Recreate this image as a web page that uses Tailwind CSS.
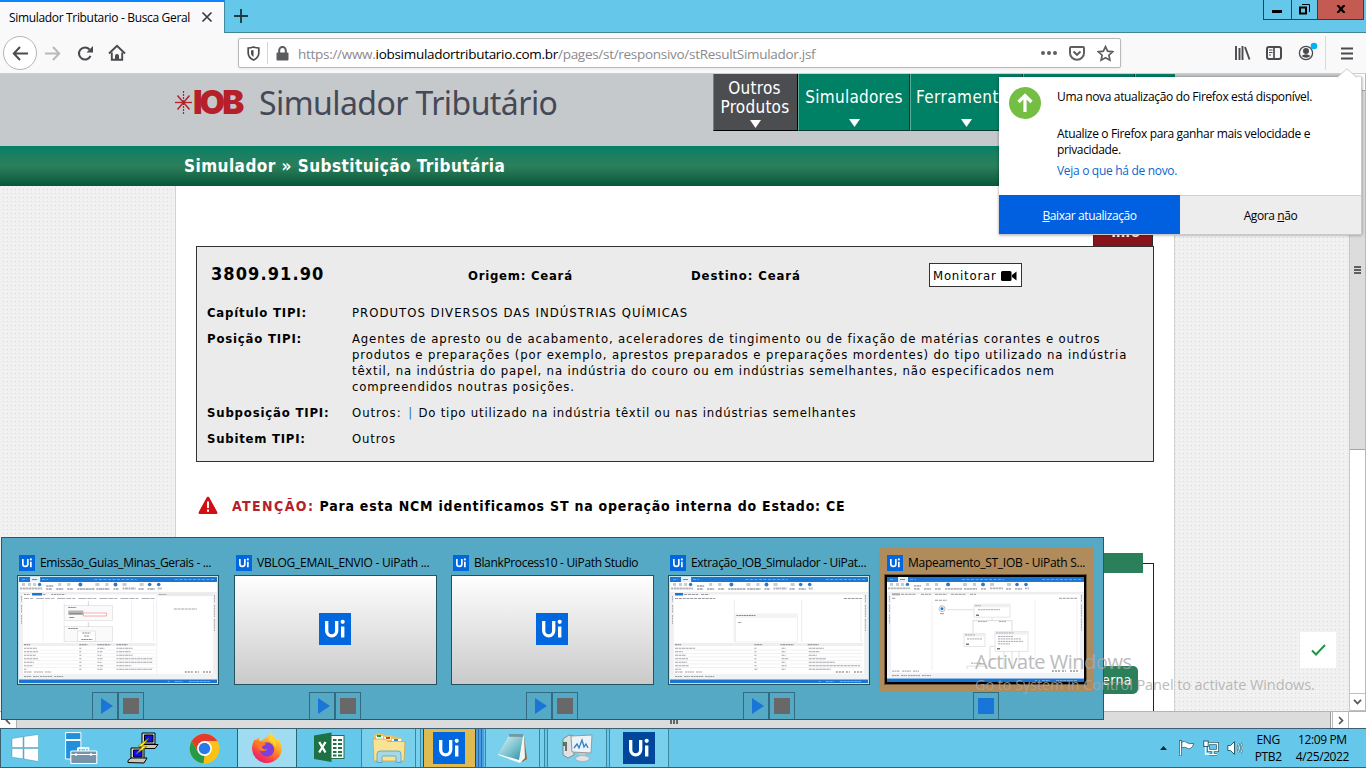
<!DOCTYPE html>
<html lang="pt">
<head>
<meta charset="utf-8">
<title>Simulador Tributario - Busca Geral</title>
<script src="https://cdn.jsdelivr.net/npm/@tailwindcss/browser@4"></script>
</head>
<body class="relative flex h-[768px] w-[1366px] flex-col overflow-hidden bg-white font-['Open_Sans',sans-serif] text-[12px] whitespace-nowrap text-black">

<!-- shared symbols -->
<svg class="hidden">
  <symbol id="ui" viewBox="0 0 32 32"><rect width="32" height="32" fill="#0067df"/><path d="M7.700 8v9.800a5 5 0 0 0 10 0V8" fill="none" stroke="#fff" stroke-width="3.300"/><path d="M23.700 13.500v11" stroke="#fff" stroke-width="3.400"/><circle cx="23.700" cy="8.800" r="2.100" fill="#fff"/></symbol>
  <symbol id="ribbon" viewBox="0 0 197 106">
    <rect width="197" height="106" fill="#fff"/>
    <rect width="197" height="5" fill="#1976d2"/><rect x="11" y="0" width="10" height="5" fill="#e8f2fc"/>
    <path d="M3 2.500h5M23 2.500h6M75 2.500h42M155 2.500h40" stroke="#6aa7e2" stroke-dasharray="3 1.500"/><path d="M13 2.500h5" stroke="#4b8fd0"/>
    <g fill="none" stroke="#6c7f94" stroke-width="3"><path d="M3 7.500h3M9 7.500h3M14 7.500h3M39 7.500h3M48 7.500h3M60 7.500h3M76 7.500h4M86 7.500h3M103 7.500h4M120 7.500h4" opacity=".4"/></g>
    <g fill="#2f78c8"><circle cx="20.500" cy="7.500" r="1.700"/><circle cx="61" cy="7.500" r="1.900"/><circle cx="96" cy="7.500" r="1.900"/><circle cx="130" cy="7.500" r="1.800"/><circle cx="139" cy="7.500" r="1.800"/></g>
    <path d="M1 11.500h22M27 9h7M27 12h6M37 12h7M48 12h6M58 12h17M77 12h13M94 12h5M103 11.500h13M119 12h5M128 12h7M138 11.500h4" stroke="#b4b4bb" stroke-width="1.800" stroke-dasharray="2 .5 3 .4"/>
    <rect y="15" width="197" height="2.500" fill="#eeeef0"/>
    <rect y="16" width="4" height="84" fill="#f1f1f3"/><rect x="193" y="16" width="4" height="84" fill="#f1f1f3"/>
    <path d="M2.500 19v6M2.500 28v8M2.500 38v9M194.500 18v7M194.500 28v12M194.500 42v12" stroke="#b0b0b6" stroke-dasharray="2 .6"/>
    <rect y="97" width="197" height="5.500" fill="#f2f2f4"/>
    <path d="M5 95h8M15 95h9M26 95h6M5 99.500h7M14 99.500h6M21 99.500h12M35 99.500h9" stroke="#9a9aa0" stroke-dasharray="2 .5"/>
    <path d="M165 95h8M175 95h4M183 95h9" stroke="#999" stroke-width="1.500" stroke-dasharray="2 1"/>
    <rect y="102.500" width="197" height="3.500" fill="#1976d2"/><path d="M148 104.500h2M155 104.500h8M169 104.500h21" stroke="#6fabe6" stroke-dasharray="3 .6"/>
  </symbol>
  <symbol id="play" viewBox="0 0 12 16"><path d="M0 0l12 8-12 8z" fill="#1976d8"/></symbol>
</svg>

<!-- tab strip -->
<header class="flex h-[33px] shrink-0 border-b border-[#458593] bg-[#65c8ea]">
  <div class="flex h-[33px] w-[225px] items-center justify-between border-t-2 border-r border-t-[#0a84ff] border-r-[#3e8aa0] bg-[#f9f9fb] pr-[11px] pl-[9px]">
    <span class="tracking-[-0.33px]">Simulador Tributario - Busca Geral</span>
    <svg class="mb-px size-[12px]" viewBox="0 0 12 12"><path d="M1.500 1.500l9 9m0-9l-9 9" stroke="#3b3b3d" stroke-width="1.700"/></svg>
  </div>
  <svg class="mt-[9px] ml-[9px] size-[14px]" viewBox="0 0 14 14"><path d="M7 0v14M0 7h14" stroke="#1e3c46" stroke-width="1.900"/></svg>
  <div class="mr-[2px] ml-auto flex h-[20px] border border-t-0 border-[#24434e]">
    <div class="flex w-[28px] border-r border-[#24434e]"><span class="mt-[10px] ml-[8px] h-[3px] w-[10px] bg-black"></span></div>
    <div class="w-[26px] border-r border-[#24434e]"><svg class="mt-[4px] ml-[7px] size-[11px]" viewBox="0 0 11 11"><path d="M1 3.500h6v6H1z" fill="none" stroke="#000" stroke-width="2"/><path d="M3 .5h7.500V8" fill="none" stroke="#000"/></svg></div>
    <div class="w-[45px] bg-[#c35b52]"><svg class="mt-[5px] ml-[18px] h-[8px] w-[10px]" viewBox="0 0 10 8"><path d="M1.500 0l7 8M8.500 0l-7 8" stroke="#000" stroke-width="2.200"/></svg></div>
  </div>
</header>

<!-- navigation bar -->
<nav class="flex h-[41px] shrink-0 items-center border-b border-[#cfcfd2] bg-[#f9f9fa] text-[#4a4a4f]">
  <div class="ml-[3px] flex size-[34px] items-center justify-center rounded-full border border-[#b5b5b8] bg-white"><svg class="size-[17px]" viewBox="0 0 17 17" fill="none" stroke="currentColor" stroke-width="2"><path d="M16 8.500H2M8 2L1.800 8.500 8 15"/></svg></div>
  <svg class="ml-[8px] size-[17px]" viewBox="0 0 17 17" fill="none" stroke="#b9b9bb" stroke-width="2"><path d="M0 8.500h14M8 2l6.200 6.500L8 15"/></svg>
  <svg class="ml-[15px] size-[17px]" viewBox="0 0 17 17"><path d="M13.500 10.800A6 6 0 1 1 12.500 4.500" fill="none" stroke="currentColor" stroke-width="2.100"/><path d="M16 1v6.500H9.500z" fill="currentColor"/></svg>
  <svg class="ml-[14px] size-[18px]" viewBox="0 0 18 18"><path d="M1 9.500L9 1.800l8 7.700" fill="none" stroke="currentColor" stroke-width="2"/><path d="M3.800 8.500v7.300h10.400V8.500" fill="none" stroke="currentColor" stroke-width="1.900"/><path d="M7 16v-4.500q0-1.500 2-1.500t2 1.500V16z" fill="currentColor"/></svg>
  <div class="ml-[112px] flex h-[30px] w-[883px] items-center rounded-[2px] border border-[#b9b9bc] bg-white pl-[8px] shadow-[0_1px_3px_rgba(0,0,0,.07)]">
    <svg class="h-[15px] w-[13px]" viewBox="0 0 13 15"><path d="M6.500 1C4.500 1.800 3 2 1.200 2v5c0 3.500 2 5.500 5.300 7 3.300-1.500 5.300-3.500 5.300-7V2c-1.800 0-3.300-.2-5.300-1z" fill="none" stroke="currentColor" stroke-width="1.700"/><path d="M6.500 4v7C4.800 9.800 4 8.800 4 7V4.500z" fill="currentColor"/></svg>
    <span class="ml-[7px] h-[22px] w-px bg-[#d7d7db]"></span>
    <svg class="ml-[8px] h-[15px] w-[13px] text-[#5c5c60]" viewBox="0 0 13 15"><rect x=".5" y="6.500" width="12" height="8" rx="1" fill="currentColor"/><path d="M3.200 7V4.200a3.300 3.300 0 0 1 6.600 0V7" fill="none" stroke="currentColor" stroke-width="2"/></svg>
    <span class="ml-[9px] pt-[2px] text-[13.500px] tracking-[-0.288px] text-[#8a8a8e]">https://www.<span class="text-black">iobsimuladortributario.com.br</span>/pages/st/responsivo/stResultSimulador.jsf</span>
    <svg class="mr-[12px] ml-auto h-[4px] w-[16px]" viewBox="0 0 16 4" fill="#5f5f63"><circle cx="2" cy="2" r="2"/><circle cx="8" cy="2" r="2"/><circle cx="14" cy="2" r="2"/></svg>
    <svg class="mr-[12px] h-[15px] w-[16px]" viewBox="0 0 16 15" fill="none" stroke="#5f5f63" stroke-width="2"><path d="M1 2q0-1 1-1h12q1 0 1 1v5a7 6.800 0 0 1-14 0z"/><path d="M4.500 5.500L8 8.800l3.500-3.300"/></svg>
    <svg class="mr-[6px] size-[17px]" viewBox="0 0 17 17"><path d="M8.500 1.600l2.100 4.600 5 .6-3.700 3.400 1 5-4.400-2.500-4.400 2.500 1-5L1.400 6.800l5-.6z" fill="none" stroke="#5f5f63" stroke-width="1.700"/></svg>
  </div>
  <svg class="ml-[113px] h-[14px] w-[17px]" viewBox="0 0 17 14"><path d="M2 0v14M5.500 2v12M8.500 0v14M11 1l4.500 12.500" fill="none" stroke="currentColor" stroke-width="1.900"/></svg>
  <svg class="ml-[15px] h-[14px] w-[16px]" viewBox="0 0 16 14" fill="none" stroke="currentColor"><rect x="1" y="1" width="14" height="12" rx="2" stroke-width="2"/><path d="M8 1v12" stroke-width="1.700"/><path d="M3 4h3.500M3 6.500h3.500M3 9h2" stroke-width="1"/></svg>
  <svg class="mt-[8px] ml-[16px] size-[20px] self-start" viewBox="0 0 20 20"><circle cx="8" cy="12" r="6.600" fill="none" stroke="currentColor" stroke-width="1.300"/><circle cx="8" cy="10" r="3" fill="currentColor"/><path d="M3.500 15q4.500-3.600 9 0-4 3.500-9 0z" fill="currentColor"/><circle cx="16" cy="5" r="3.300" fill="#00b3f4"/></svg>
  <span class="ml-[7px] h-[34px] w-px bg-[#d9d9dc]"></span>
  <svg class="ml-[15px] h-[13px] w-[12px]" viewBox="0 0 12 13"><path d="M0 1.500h12M0 6.500h12M0 11.500h12" stroke="currentColor" stroke-width="2"/></svg>
</nav>

<!-- page viewport -->
<div class="flex h-[637px] shrink-0">
  <main class="w-[1349px] bg-[#f1f1f1] font-['DejaVu_Sans_Condensed','DejaVu_Sans',sans-serif] [background-image:linear-gradient(90deg,#f1f1f1_3px,transparent_3px),linear-gradient(#f1f1f1_3px,#d9d9d9_3px)] bg-[size:4px_4px]">
    <div class="flex h-[72px] bg-[#c5c9cc] pl-[175px]">
      <svg class="mt-[16px] h-[25px] w-[18px]" viewBox="0 0 18 25" fill="none" stroke="#b6202a"><path d="M8.500 1v23" stroke-width="1.200" stroke-dasharray="2 1"/><path d="M0 12.500h17" stroke-width="1.300"/><path d="M2.500 5.500l12 14M14.500 5.500l-12 14" stroke-width="1.500"/></svg>
      <div class="mt-[13px] w-[51px] font-['Inter',sans-serif] text-[33px] leading-[30px] font-black tracking-[-3px] text-[#b6202a]">IOB</div>
      <div class="mt-[8px] ml-[15px] w-[454px] font-['Noto_Sans',sans-serif] text-[32px] leading-[42px] tracking-[-0.57px] text-[#464856]">Simulador Tributário</div>
      <div class="flex h-[57px] w-[462px] bg-[#008064] text-center text-[17px] leading-[19px] tracking-[0.25px] text-white">
        <div class="w-[85px] border-r border-b border-l border-r-black border-b-black border-l-[#7c7e83] bg-[#4c4d51] pt-[5px]"><span class="mr-[2px]">Outros</span><br><span class="mr-px">Produtos</span><svg class="mx-auto mt-[3px] h-[8px] w-[11px]" viewBox="0 0 11 8"><path d="M0 0h11L5.500 8z" fill="#fff"/></svg></div>
        <div class="w-[112px] border-r border-b border-l border-r-[#013c2d] border-b-[#013c2d] border-l-[#5fae9b] pt-[14px]">Simuladores<svg class="mx-auto mt-[12px] h-[8px] w-[11px]" viewBox="0 0 11 8"><path d="M0 0h11L5.500 8z" fill="#fff"/></svg></div>
        <div class="w-[113px] border-r border-b border-l border-r-[#013c2d] border-b-[#013c2d] border-l-[#5fae9b] pt-[14px]"><span class="tracking-[0.45px]">Ferramentas</span><svg class="mx-auto mt-[12px] h-[8px] w-[11px]" viewBox="0 0 11 8"><path d="M0 0h11L5.500 8z" fill="#fff"/></svg></div>
        <div class="w-[112px] border-r border-l border-r-[#013c2d] border-l-[#5fae9b]"></div>
        <div class="w-[40px] border-l border-[#5fae9b]"></div>
      </div>
    </div>
    <div class="h-[40px] bg-gradient-to-b from-[#008064] via-[#2b7f5b] to-[#05583a] pl-[184px] text-[17px] leading-[40px] font-bold tracking-[0.46px] text-white">Simulador » Substituição Tributária</div>

    <div class="ml-[175px] h-[525px] w-[1000px] border-x border-[#d2d2d2] bg-white pl-[20px]">
      <div class="ml-[897px] flex h-[60px] w-[60px] items-end justify-center border border-b-0 border-[#2c2c2c] bg-gradient-to-b from-[#b6202a] to-[#83131a] pb-[4px] pl-[5px] font-['DejaVu_Sans',sans-serif] text-[13px] leading-[18px] font-bold text-white">Info</div>
      <section class="h-[216px] w-[958px] border border-[#333] bg-[#ebebeb] px-[10px] text-[13px] leading-[16px]">
        <div class="flex h-[54px] items-center pt-[2px] font-bold">
          <span class="w-[261px] pb-[3px] pl-[4px] text-[18px] tracking-[1.100px]">3809.91.90</span>
          <span class="w-[223px] pt-px tracking-[0.75px]">Origem: Ceará</span>
          <span class="w-[238px] pt-px tracking-[0.88px]">Destino: Ceará</span>
          <button class="flex h-[24px] w-[93px] items-center border border-[#333] bg-white pt-px pl-[3px] font-normal tracking-[0.8px]">Monitorar<svg class="ml-[4px] h-[10px] w-[16px]" viewBox="0 0 16 10"><rect width="10.500" height="10" rx="1.500"/><path d="M11 4l4.500-3.500v9L11 6z"/></svg></button>
        </div>
        <dl class="mt-[4px] grid grid-cols-[145px_1fr] gap-y-[10px] tracking-[0.84px]">
          <dt class="font-bold tracking-[0.79px]">Capítulo TIPI:</dt><dd class="tracking-[1.020px]">PRODUTOS DIVERSOS DAS INDÚSTRIAS QUÍMICAS</dd>
          <dt class="font-bold tracking-[0.82px]">Posição TIPI:</dt><dd><span>Agentes de apresto ou de acabamento, aceleradores de tingimento ou de fixação de matérias corantes e outros</span><br><span class="tracking-[0.87px]">produtos e preparações (por exemplo, aprestos preparados e preparações mordentes) do tipo utilizado na indústria</span><br>têxtil, na indústria do papel, na indústria do couro ou em indústrias semelhantes, não especificados nem<br>compreendidos noutras posições.</dd>
          <dt class="font-bold tracking-[0.82px]">Subposição TIPI:</dt><dd><span class="tracking-[0.95px]">Outros:</span> <span class="mr-px ml-[2px] text-[#2a72b5]">|</span> <span class="tracking-[0.79px]">Do tipo utilizado na indústria têxtil ou nas indústrias semelhantes</span></dd>
          <dt class="font-bold tracking-[0.76px]">Subitem TIPI:</dt><dd>Outros</dd>
        </dl>
      </section>
      <div class="mt-[34px] flex h-[20px] items-center text-[14px] font-bold tracking-[0.78px]">
        <svg class="mb-px ml-[2px] h-[19px] w-[20px]" viewBox="0 0 20 19"><path d="M10 .7c1 0 1.300.7 1.600 1.200l7.600 14c.6 1.300 0 2.200-1.200 2.200H2c-1.200 0-1.800-.9-1.200-2.200l7.600-14C8.700 1.400 9 .7 10 .7z" fill="#d20f14"/><path d="M10 5.500v6.500M10 13.500v2.200" stroke="#fff" stroke-width="2"/></svg>
        <span class="ml-[14px]"><span class="tracking-[1.400px] text-[#b6202a]">ATENÇÃO:</span> Para esta NCM identificamos ST na operação interna do Estado: CE</span>
      </div>
      <div class="mt-[47px] h-[148px] w-[958px] border border-b-0 border-[#222]">
        <div class="mt-[-11px] ml-[9px] h-[20px] w-[937px] bg-[#2b7f5b]"></div>
        <div class="mt-[93px] mr-[15px] ml-auto flex h-[28px] w-[190px] items-center justify-end rounded-[5px] bg-[#2b7f5b] pr-[6px] text-[14px] tracking-[0.4px] text-white">Interna</div>
      </div>
    </div>
  </main>
  <!-- vertical scrollbar -->
  <div class="flex w-[17px] flex-col border-x border-r-[#b9b9b9] border-l-[#c6c6c6] bg-white">
    <div class="h-[16px]"></div>
    <div class="flex h-[360px] flex-col items-center justify-center gap-px border-y border-[#a6a6a6] bg-[#dcdcdc]"><i class="h-[2px] w-[7px] bg-[#606060]"></i><i class="h-[2px] w-[7px] bg-[#606060]"></i><i class="h-[2px] w-[7px] bg-[#606060]"></i></div>
    <div class="mt-auto flex h-[18px] items-center justify-center border-y border-[#c0c0c0]"><svg class="h-[6px] w-[9px]" viewBox="0 0 9 6"><path d="M1 .8l3.500 3.700L8 .8" fill="none" stroke="#555" stroke-width="1.700"/></svg></div>
  </div>
</div>

<!-- horizontal scrollbar -->
<div class="flex h-[17px] shrink-0 border-t border-[#b4b4b4] bg-white">
  <div class="flex w-[17px] items-center justify-center border-r border-[#b0b0b0]"><svg class="h-[9px] w-[6px]" viewBox="0 0 6 9"><path d="M5 1L1.500 4.500 5 8" fill="none" stroke="#555" stroke-width="1.700"/></svg></div>
  <div class="flex w-[1314px] items-center justify-center gap-px border-r border-[#999] bg-[#dcdcdc]"><i class="h-[7px] w-[2px] bg-[#666]"></i><i class="h-[7px] w-[2px] bg-[#666]"></i><i class="h-[7px] w-[2px] bg-[#666]"></i></div>
  <div class="ml-px flex w-[17px] items-center justify-center border-x border-[#b9b9b9]"><svg class="h-[9px] w-[6px]" viewBox="0 0 6 9"><path d="M1 1l3.500 3.500L1 8" fill="none" stroke="#555" stroke-width="1.700"/></svg></div>
</div>

<!-- taskbar -->
<footer class="flex h-[40px] shrink-0 border border-r-0 border-[#39606e] bg-[#65c8ea]">
  <svg class="mt-[5px] ml-[10px] size-[28px]" viewBox="0 0 28 28" fill="#fff" stroke="#2e86a5" stroke-width=".4"><path d="M1 4.500l11-1.800v10.800H1zM13 2.500L27.500.5v13H13zM1 14.500h11v10.300L1 23.200zM13 14.500h14.500v13L13 25z"/></svg>
  <svg class="mt-[3px] ml-[26px] h-[32px] w-[33px]" viewBox="0 0 33 32"><g stroke="#fff"><path d="M.6.6h15.300v6.900H.600zM.600 8.500h15.300V27H.600z" fill="#2090dc"/><path d="M12.500 19v-3h8v3" fill="none"/><rect x="5.800" y="19" width="26" height="12.500" rx="1" fill="#7893a9" stroke-width="1.100"/><path d="M13.500 18.500V16h10v2.500" fill="none" stroke-width="1.500"/><path d="M6 22.500h26"/></g><circle cx="11" cy="22.500" r="1.300" fill="#fff"/><circle cx="26" cy="22.500" r="1.300" fill="#fff"/></svg>
  <svg class="mt-[3px] ml-[29px] size-[32px]" viewBox="0 0 32 32"><g stroke="#000"><path d="M15 1h13v11H15z" fill="#d8d8cc"/><path d="M17.500 3h8.500v7h-8.500z" fill="#1010ef"/><path d="M13 15.500l3-3h15l-3 4H14z" fill="#c9c9bb"/><path d="M4 16h13v11H4z" fill="#d8d8cc"/><path d="M6.500 18h8.500v7H6.500z" fill="#1010ef"/><path d="M1 30.500v-2l3-2.500h16l-3 5z" fill="#c9c9bb"/><path d="M22 6l-11 8 4.500.5L9 22l11-7.500-4.500-.5z" fill="#fff21a" stroke="#7c7200" stroke-width=".6"/></g></svg>
  <svg class="mt-[4px] ml-[30px] size-[31px]" viewBox="0 0 48 48"><circle cx="24" cy="24" r="23" fill="#fbc116"/><path d="M4.100 12.500A23 23 0 0 1 43.900 12.500H24L14 29.800z" fill="#e33b2e"/><path d="M4.100 12.500L14 29.800 24 34.500 22.500 47A23 23 0 0 1 4.100 12.500z" fill="#259b48"/><path d="M43.900 12.500A23 23 0 0 1 22.500 47L34 29.800 33 12.500z" fill="#fbc116"/><circle cx="24" cy="24" r="11.500" fill="#fff"/><circle cx="24" cy="24" r="9" fill="#287ae8"/></svg>
  <div class="ml-[17px] flex w-[60px] items-center justify-center border-x border-[#276577] bg-[#a0dcf1]">
    <svg class="size-[32px]" viewBox="0 0 32 32"><defs><linearGradient id="fx" x1=".8" y1="0" x2=".2" y2="1"><stop offset="0" stop-color="#fff044"/><stop offset=".4" stop-color="#ff9b25"/><stop offset=".75" stop-color="#fb3c48"/><stop offset="1" stop-color="#e31587"/></linearGradient></defs><path d="M20 .5c2 3 4 4 5 6.500l3 1c3 5 3.500 10.500 1 15.500A15 15 0 0 1 1 17C1 12 2.500 9 4 7l.5 1.500 3-3 1 3.500 3-.5C14 5 18 5 20 .5z" fill="url(#fx)"/><circle cx="16" cy="17.500" r="7.200" fill="#8040d8"/><path d="M4 8l6 2 5 1.500c-1 2-3 2-4 3 0 2.500 3 4 5.500 2-1.500 4-8.500 3.500-9.500-1z" fill="#ff7a1e"/><path d="M17 8c4 1 7 4 7 8 2-4 0-9-4-12z" fill="#ffd52e"/></svg>
  </div>
  <svg class="mt-[3px] ml-[16px] h-[32px] w-[33px]" viewBox="0 0 33 32"><rect x="17" y="3.500" width="14" height="23" fill="#fff" stroke="#1e7145"/><path d="M20 8h3.500M25 8h4M20 12h3.500M25 12h4M20 16h3.500M25 16h4M20 20h3.500M25 20h4M20 23.500h3.500M25 23.500h4" stroke="#1e7145" stroke-width="2"/><path d="M1 3.500L18.500.5v29.500L1 27z" fill="#1e7145"/><path d="M6.200 10l6.300 10.500M12.500 10L6.200 20.500" stroke="#fff" stroke-width="2.300"/></svg>
  <div class="ml-[15px] flex w-[55px] items-center justify-center border-x border-[#3b86a1] bg-[#79d0ec]">
    <svg class="h-[31px] w-[34px]" viewBox="0 0 34 31"><path d="M2 4V2l2-1.500h7L13 2h6l2 1 9 2v22L4 28z" fill="#e7c25e"/><path d="M4 3h7v3H4zM12 4h7v3h-7zM20 6h9v3h-9z" fill="#fff"/><path d="M5 2h4v2H5z" fill="#18a336"/><path d="M14 4h4v2h-4z" fill="#d33b28"/><path d="M22 6h4v2h-4z" fill="#238fdc"/><path d="M1 6h12l3 2.500h17L32 28H2z" fill="#f8e394" stroke="#caa03d" stroke-width=".7"/><path d="M5 29.500V21q0-3 3-3h18q3 0 3 3v8.500h-5V24q0-1-1-1H11q-1 0-1 1v5.500z" fill="#9ad7f2" fill-opacity=".9" stroke="#539fc5" stroke-width=".8"/></svg>
  </div>
  <div class="w-[5px] border-r border-[#3b86a1] bg-[#79d0ec]"></div>
  <div class="ml-[2px] flex w-[53px] items-center border-x border-[#39481f] bg-[#dfba50] pl-[9px]"><svg class="size-[32px]"><use href="#ui"/></svg></div>
  <div class="flex w-[8px]"><i class="w-[3px] border-r border-[#286ca8] bg-[#4b9ce2]"></i><i class="w-[3px] border-r border-[#286ca8] bg-[#4b9ce2]"></i><i class="w-[2px] bg-[#4b9ce2]"></i></div>
  <div class="ml-px flex w-[55px] items-center justify-center border-x border-[#3b86a1] bg-[#79d0ec]">
    <svg class="size-[31px]" viewBox="0 0 31 31"><defs><linearGradient id="np" x2="1" y2="1"><stop stop-color="#e3f8fb"/><stop offset=".6" stop-color="#73bfcb"/><stop offset="1" stop-color="#2f8c9d"/></linearGradient></defs><path d="M27 3l3 23-5 3z" fill="#8a6a43"/><path d="M24 4l3-1 1 22-5 5z" fill="#f4f4f2"/><path d="M12 3h14l-3 27L1 22z" fill="#f6fafa"/><path d="M12 3h14l-4 24L1 21z" fill="url(#np)"/><path d="M12.500 2.500h14" stroke="#666" stroke-width="3" stroke-dasharray="1 1"/></svg>
  </div>
  <div class="w-[5px] border-r border-[#3b86a1] bg-[#79d0ec]"></div>
  <div class="ml-[2px] flex w-[60px] items-center justify-center border-x border-[#3b86a1] bg-[#79d0ec]">
    <svg class="h-[29px] w-[31px]" viewBox="0 0 31 29"><path d="M1 5l6-4 5 1v19l-6 3-5-3z" fill="#dfe2e4" stroke="#777" stroke-width=".8"/><path d="M2 8v4M4 8v9" stroke="#444" stroke-width="1.500"/><circle cx="3" cy="9" r="1.300" fill="#20a82a"/><path d="M9 2l21-1-1 18-19-1z" fill="#f1f2f2" stroke="#999"/><path d="M11 4l17-.8-.8 13.800-15.700-.5z" fill="#eaf4fb"/><path d="M12 14l3-4 2 4 3-8 2 7 2-3 2 4" fill="none" stroke="#337fc1" stroke-width="1.300"/><path d="M17 19h6l1 4h-7z" fill="#c5c8ca"/><ellipse cx="20.500" cy="24.500" rx="7" ry="3" fill="#e0e2e3" stroke="#999" stroke-width=".6"/></svg>
  </div>
  <div class="ml-[2px] flex w-[60px] items-center justify-center border-x border-[#3b86a1] bg-[#79d0ec]"><svg class="size-[32px]" viewBox="0 0 32 32"><rect width="32" height="32" fill="#00479c"/><path d="M7.700 8v9.800a5 5 0 0 0 10 0V8" fill="none" stroke="#fff" stroke-width="3.300"/><path d="M23.700 13.500v11" stroke="#fff" stroke-width="3.400"/><circle cx="23.700" cy="8.800" r="2.100" fill="#fff"/></svg></div>
  <div class="mr-[17px] ml-auto flex items-center">
    <svg class="h-[4px] w-[7px]" viewBox="0 0 7 4"><path d="M0 4l3.500-4L7 4z" fill="#10242b"/></svg>
    <svg class="ml-[12px] size-[16px]" viewBox="0 0 16 16"><path d="M1.500 0v16" stroke="#28606f" stroke-width="2.500"/><path d="M1.500 1v14.500" stroke="#fff" stroke-width="1.200"/><path d="M2.800 2q3-1.500 5 .5 1.500 1.800 7 1-.8 3.500-3.500 5-2 .8-3.500-.5-2-1.500-5 0z" fill="#fff" stroke="#28606f" stroke-width=".8"/></svg>
    <svg class="ml-[8px] size-[16px]" viewBox="0 0 16 16"><path d="M5.500 3.500h9v7h-9zM10 11v3M6 14.500h8" fill="none" stroke="#28606f" stroke-width="3"/><path d="M5.500 3.500h9v7h-9zM10 11v3M6 14.500h8M2.500 7v7h4" fill="none" stroke="#fff" stroke-width="1.400"/><rect x=".7" y="1" width="4.500" height="5.500" fill="#fff" stroke="#28606f"/></svg>
    <svg class="ml-[8px] size-[16px]" viewBox="0 0 16 16"><path d="M.8 5.500h2.700l4-4v13l-4-4H.8z" fill="#fff" stroke="#28606f"/><path d="M9.500 5.500q1.500 2.500 0 5M11.500 4q2.500 4 0 8M13.500 2.500q3.500 5.500 0 11" fill="none" stroke="#28606f" stroke-width="1.800"/><path d="M9.500 5.500q1.500 2.500 0 5M11.500 4q2.500 4 0 8M13.500 2.500q3.500 5.500 0 11" fill="none" stroke="#fff" stroke-width=".9"/></svg>
    <div class="ml-[12px] text-center leading-[17px] tracking-[-0.35px]">ENG<br>PTB2</div>
    <div class="ml-[14px] text-center leading-[17px] tracking-[-0.4px]">12:09 PM<br>4/25/2022</div>
  </div>
</footer>

<!-- floating check box -->
<div class="absolute top-[632px] left-[1300px] flex size-[36px] items-center justify-center bg-white"><svg class="h-[12px] w-[15px]" viewBox="0 0 15 12"><path d="M1 6.500L5 10.500 14 1" fill="none" stroke="#249444" stroke-width="2"/></svg></div>

<!-- update panel -->
<div class="absolute top-[77px] left-[999px] w-[363px] border-r border-b border-[#c9c9c9] bg-white shadow-[0_0_3px_rgba(0,0,0,.4)]">
  <svg class="absolute top-[-9px] right-[4px] h-[10px] w-[20px]" viewBox="0 0 20 10"><path d="M0 9.500L10 .8l10 8.700" fill="#fff" stroke="#ccc"/></svg>
  <div class="flex h-[118px] pt-[10px] pl-[10px]">
    <svg class="size-[32px]" viewBox="0 0 32 32"><circle cx="16" cy="16" r="16" fill="#74bf43"/><path d="M16 25V9M9.500 15L16 8.500l6.500 6.500" fill="none" stroke="#fff" stroke-width="3.200"/></svg>
    <div class="ml-[16px] pt-[2px] leading-[16px] tracking-[-0.35px]"><p>Uma nova atualização do Firefox está disponível.</p><p class="mt-[21px]">Atualize o Firefox para ganhar mais velocidade e<br>privacidade.</p><p class="mt-[5px] tracking-[-0.31px] text-[#0a66cf]">Veja o que há de novo.</p></div>
  </div>
  <div class="flex h-[39px] text-center leading-[42px] tracking-[-0.4px]"><div class="w-[181px] bg-[#0060df] text-white"><u>B</u>aixar atualização</div><div class="flex-1 border-t border-[#d0d0d0] bg-[#ededed] leading-[40px]">Agora <u>n</u>ão</div></div>
</div>

<!-- window previews -->
<div class="absolute top-[537px] left-[1px] flex h-[183px] w-[1103px] items-start border border-[#28596a] bg-[#55a9c4] pt-[9px] pl-[9px]">
  <article class="w-[217px] px-[6px]">
    <div class="flex h-[28px] items-center pt-[3px]"><svg class="mr-px ml-[2px] size-[16px]"><use href="#ui"/></svg><span class="ml-[4px] tracking-[-0.35px]">Emissão_Guias_Minas_Gerais - ...</span></div>
    <div class="h-[110px] w-[202px] border border-[#24535f] bg-[#c6e2ea] p-px"><svg class="block h-[106px] w-[198px]" viewBox="0 0 197 106" preserveAspectRatio="none"><use href="#ribbon"/><rect x="13" y="16" width="10" height="2.500" fill="#1976d2"/><path d="M5 17.500h6M24 17.500h3M32 17.500h14" stroke="#999" stroke-dasharray="2 .7"/><path d="M5 21.500h130" stroke="#b0b0b8" stroke-dasharray="5 1 3 3 8 1"/><path d="M24 24v41M45 24v41M112 24v41M137 18v80M134 24v40" stroke="#ebebee" stroke-width=".7"/><g fill="#fafafa" stroke="#dedee2" stroke-width=".7"><rect x="45" y="28.500" width="48" height="15"/><rect x="45" y="49.500" width="48" height="15"/></g><rect x="58" y="54" width="18" height="10.500" fill="#fff" stroke="#ccc" stroke-width=".5"/><path d="M49 30.500h8M49 51.500h10M63 56h8M65 59h5M62 62.500h11" stroke="#888" stroke-dasharray="2 .5"/><path d="M49 33.500h15v4.500H49z" fill="#b4b4b4"/><path d="M50 36.500h13" stroke="#8b8b8b"/><path d="M64 36h23v3H64z" fill="#fff" stroke="#f08a8a" stroke-width=".7"/><path d="M50 40.500h5" stroke="#e07070"/><path d="M69 24v5M69 45v5" stroke="#bbb" stroke-width=".6"/><rect x="4" y="66" width="132" height="3" fill="#efeff1"/><path d="M5 67.700h6M60 67.700h8M78 67.700h13M97 67.700h11" stroke="#808086" stroke-dasharray="2 .5"/><path d="M5 73h131M5 76.500h131M5 80h131M5 83.500h131M5 87h131M5 90.500h131" stroke="#e6e6e8" stroke-width=".5"/><path d="M5 71.200h13M5 74.700h14M5 78.200h12M5 81.700h14M5 85.200h10M5 88.700h9M5 92.200h3M60 71.200h2M60 74.700h2M60 78.200h2M60 81.700h2M60 85.200h2M60 88.700h2M60 92.200h2M78 71.200h7M78 74.700h5M78 78.200h4M78 81.700h5M78 85.200h4M78 88.700h6M78 92.200h5M97 71.200h16M97 74.700h14M97 78.200h16M97 81.700h36M97 85.200h36M97 88.700h15M97 92.200h36" stroke="#a4a4ac" stroke-dasharray="2 .6 3 .4"/><path d="M138 17.500h55" stroke="#ebebed" stroke-width="3"/><path d="M139 17.500h8M154 32h23" stroke="#a8a8ae" stroke-dasharray="3 .6"/></svg></div>
    <div class="mt-[7px] ml-[75px] flex h-[27px] w-[52px] border border-b-0 border-[#326c80]"><div class="flex w-[25px] items-center justify-end border-r border-[#326c80] pr-[4px]"><svg class="h-[16px] w-[12px]"><use href="#play"/></svg></div><div class="flex flex-1 items-center border-l border-[#326c80] pl-[4px]"><i class="size-[16px] bg-[#686868]"></i></div></div>
  </article>
  <article class="w-[217px] px-[6px]">
    <div class="flex h-[28px] items-center pt-[3px]"><svg class="mr-px ml-[2px] size-[16px]"><use href="#ui"/></svg><span class="ml-[4px] tracking-[-0.25px]">VBLOG_EMAIL_ENVIO - UiPath ...</span></div>
    <div class="flex h-[110px] w-[203px] items-center border border-[#24535f] bg-gradient-to-b from-white to-[#cacaca] pb-[2px] pl-[84px]"><svg class="size-[32px]"><use href="#ui"/></svg></div>
    <div class="mt-[7px] ml-[75px] flex h-[27px] w-[52px] border border-b-0 border-[#326c80]"><div class="flex w-[25px] items-center justify-end border-r border-[#326c80] pr-[4px]"><svg class="h-[16px] w-[12px]"><use href="#play"/></svg></div><div class="flex flex-1 items-center border-l border-[#326c80] pl-[4px]"><i class="size-[16px] bg-[#686868]"></i></div></div>
  </article>
  <article class="w-[217px] px-[6px]">
    <div class="flex h-[28px] items-center pt-[3px]"><svg class="mr-px ml-[2px] size-[16px]"><use href="#ui"/></svg><span class="ml-[4px] tracking-[-0.34px]">BlankProcess10 - UiPath Studio</span></div>
    <div class="flex h-[110px] w-[203px] items-center border border-[#24535f] bg-gradient-to-b from-white to-[#cacaca] pb-[2px] pl-[84px]"><svg class="size-[32px]"><use href="#ui"/></svg></div>
    <div class="mt-[7px] ml-[75px] flex h-[27px] w-[52px] border border-b-0 border-[#326c80]"><div class="flex w-[25px] items-center justify-end border-r border-[#326c80] pr-[4px]"><svg class="h-[16px] w-[12px]"><use href="#play"/></svg></div><div class="flex flex-1 items-center border-l border-[#326c80] pl-[4px]"><i class="size-[16px] bg-[#686868]"></i></div></div>
  </article>
  <article class="w-[217px] px-[6px]">
    <div class="flex h-[28px] items-center pt-[3px]"><svg class="mr-px ml-[2px] size-[16px]"><use href="#ui"/></svg><span class="ml-[4px] tracking-[-0.33px]">Extração_IOB_Simulador - UiPat...</span></div>
    <div class="h-[110px] w-[202px] border border-[#24535f] bg-[#c6e2ea] p-px"><svg class="block h-[106px] w-[198px]" viewBox="0 0 197 106" preserveAspectRatio="none"><use href="#ribbon"/><rect x="5" y="16" width="8" height="2.500" fill="#1976d2"/><path d="M14 17.500h14M31 17.500h8M5 21.500h40M173 21.500h18" stroke="#9a9aa0" stroke-dasharray="3 .8"/><path d="M64 23v42M131 23v42M190 23v42" stroke="#e8e8eb" stroke-width=".8"/><rect x="65" y="37" width="62" height="28" fill="#fff" stroke="#e6e6e9" stroke-width=".6"/><path d="M65 37h62v4H65z" fill="#f4f4f6"/><path d="M66 38.500h19M68 45.500h3" stroke="#888" stroke-dasharray="2 .5"/><rect x="4" y="66" width="188" height="3" fill="#efeff1"/><path d="M5 67.700h6M84 67.700h8M110 67.700h13M137 67.700h11" stroke="#808086" stroke-dasharray="2 .5"/><path d="M5 73h186M5 76.500h186M5 80h186M5 83.500h186M5 87h186M5 90.500h186" stroke="#e2e2e5" stroke-width=".5"/><path d="M5 71.200h20M5 74.700h8M5 78.200h11M5 81.700h13M5 85.200h12M5 88.700h14M5 92.200h6M84 71.200h2M84 74.700h2M84 78.200h2M84 81.700h2M84 85.200h2M84 88.700h2M84 92.200h3M111 71.200h4M111 74.700h4M111 78.200h4M111 81.700h7M111 85.200h4M111 88.700h5M111 92.200h4M138 71.200h15M138 74.700h11M138 78.200h8M138 81.700h17M138 85.200h26M138 88.700h51M138 92.200h22" stroke="#a4a4ac" stroke-dasharray="3 .5"/></svg></div>
    <div class="mt-[7px] ml-[75px] flex h-[27px] w-[52px] border border-b-0 border-[#326c80]"><div class="flex w-[25px] items-center justify-end border-r border-[#326c80] pr-[4px]"><svg class="h-[16px] w-[12px]"><use href="#play"/></svg></div><div class="flex flex-1 items-center border-l border-[#326c80] pl-[4px]"><i class="size-[16px] bg-[#686868]"></i></div></div>
  </article>
  <article class="w-[215px]">
    <div class="h-[145px] bg-[#b08b5b] px-[6px]">
      <div class="flex h-[28px] items-center pt-[3px]"><svg class="mx-[2px] size-[16px]"><use href="#ui"/></svg><span class="ml-[3px] tracking-[-0.27px]">Mapeamento_ST_IOB - UiPath S...</span></div>
      <div class="h-[109px] w-[201px] border-2 border-black bg-white outline outline-[#6c5538]"><svg class="block h-[105px] w-[197px]" viewBox="0 0 197 106" preserveAspectRatio="none"><use href="#ribbon"/><path d="M5 17.500h8" stroke="#aaa" stroke-width="2"/><path d="M14 17.500h15M34 17.500h10M48 17.500h12M64 17.500h15M83 17.500h6M5 21.500h4M172 21.500h19M48 23.500h12" stroke="#9a9aa0" stroke-dasharray="3 .8"/><path d="M45 24v70M148 24v70M190 24v70" stroke="#ececef" stroke-width=".8"/><circle cx="55" cy="32" r="3" fill="none" stroke="#bbb"/><circle cx="55" cy="32" r="1.500" fill="#1976d2"/><path d="M53 37h4" stroke="#999"/><g fill="none" stroke="#ceced3" stroke-width=".7"><path d="M60 33h27M105 41v3M86 57V44h39v12M117 75v18M125 75v18M132 75v18M108 70h-5v20H80v3"/></g><g fill="#fff" stroke="#dadade" stroke-width=".7"><rect x="87" y="27.500" width="36" height="13"/><rect x="77" y="57" width="21" height="13"/><rect x="108" y="55" width="33" height="20"/></g><path d="M87 27.500h36v3H87zM77 57h21v3H77zM108 55h33v3h-33z" fill="#f0f0f2"/><path d="M88 29h6M91 33h22M78 58.500h10M80 62.500h15M109 56.500h18M111 60h15M111 62.500h23M111 65h25M111 67.500h12M91 45h9M112 45h7M84 87h10" stroke="#a4a4ac" stroke-dasharray="2 .6"/><path d="M89 38.500h3M79 68h3M110 72.500h3" stroke="#777" stroke-width="1.500"/></svg></div>
    </div>
    <div class="ml-[94px] flex h-[27px] w-[26px] items-center justify-center border border-b-0 border-[#326c80]"><i class="size-[16px] bg-[#1976d8]"></i></div>
  </article>
</div>

<!-- activation watermark -->
<div class="absolute top-[649px] left-[975px] text-[#a8a8a8]/80">
  <p class="text-[20px] leading-[26px] tracking-[-0.48px]">Activate Windows</p>
  <p class="text-[14.500px] leading-[20px] tracking-[-0.09px]">Go to System in Control Panel to activate Windows.</p>
</div>
</body>
</html>
